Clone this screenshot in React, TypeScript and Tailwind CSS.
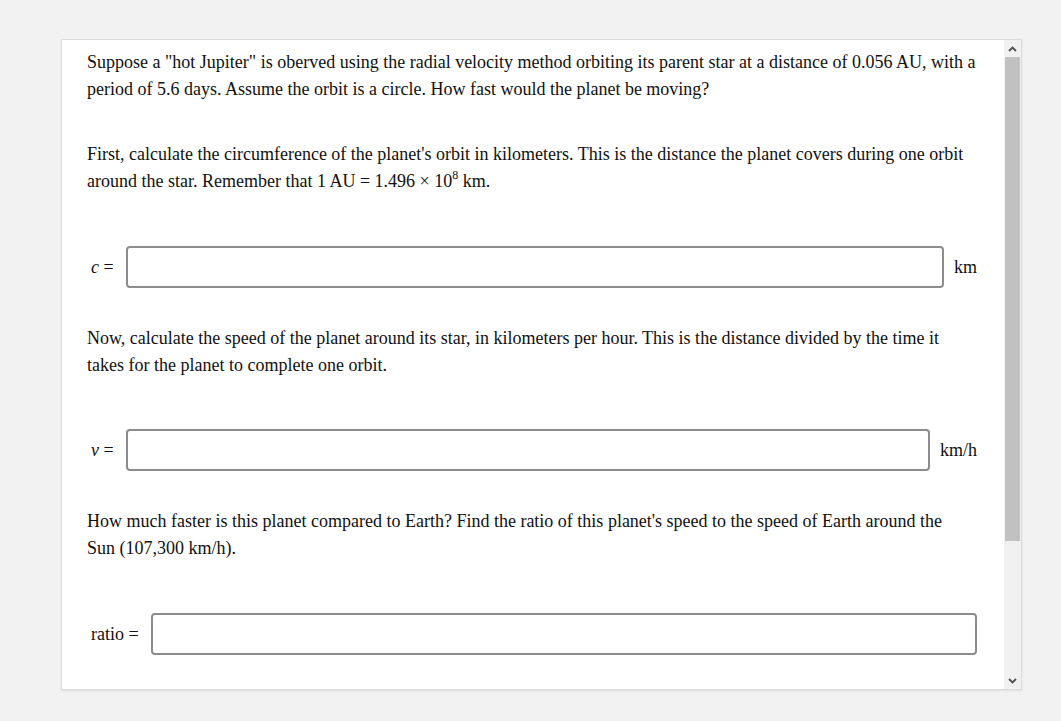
import React from "react";

const serif = { fontFamily: '"Liberation Serif", "Times New Roman", serif' };

const AnswerRow: React.FC<{ label: React.ReactNode; unit?: string }> = ({ label, unit }) => (
  <div className="mr-[2px] flex items-center">
    <span className="pl-[4px] pr-[12px] whitespace-nowrap">{label}</span>
    <input
      type="text"
      className="h-[42px] min-w-0 flex-1 rounded-[4px] border-2 border-[#8c8c8c] bg-white px-2 outline-none"
    />
    {unit && <span className="pl-[10px] whitespace-nowrap">{unit}</span>}
  </div>
);

const Scrollbar: React.FC = () => (
  <div className="flex w-[17px] flex-col bg-[#f1f1f1]">
    <div className="flex h-[17px] items-center justify-center">
      <svg width="9" height="6" viewBox="0 0 9 6">
        <path d="M1 5 L4.5 1.5 L8 5" fill="none" stroke="#505050" strokeWidth="1.8" />
      </svg>
    </div>
    <div className="mx-[1px] h-[484px] bg-[#c1c1c1]" />
    <div className="flex-1" />
    <div className="flex h-[17px] items-center justify-center">
      <svg width="9" height="6" viewBox="0 0 9 6">
        <path d="M1 1 L4.5 4.5 L8 1" fill="none" stroke="#505050" strokeWidth="1.8" />
      </svg>
    </div>
  </div>
);

export default function App() {
  return (
    <div className="min-h-screen bg-[#f2f2f2] pl-[61px] pt-[39px]" style={serif}>
      <div className="flex h-[651px] w-[961px] border border-[#dcdcdc] bg-white shadow-[0_1px_2px_rgba(0,0,0,0.08)]">
        <div className="flex-1 overflow-hidden pl-[25px] pr-[25px] pt-[9px] text-[18px] leading-[27px] text-[#111]">
          <p className="mb-[38px]">
            Suppose a "hot Jupiter" is oberved using the radial velocity method orbiting its parent star at a
            distance of 0.056 AU, with a<br />
            period of 5.6 days. Assume the orbit is a circle. How fast would the planet be moving?
          </p>
          <p className="mb-[51px]">
            First, calculate the circumference of the planet's orbit in kilometers. This is the distance the
            planet covers during one orbit
            <br />
            around the star. Remember that 1 AU = 1.496 × 10
            <span className="relative -top-[8px] text-[12px] leading-none">8</span> km.
          </p>
          <AnswerRow label={<><i>c</i> =</>} unit="km" />
          <p className="mb-[50px] mt-[37px]">
            Now, calculate the speed of the planet around its star, in kilometers per hour. This is the
            distance divided by the time it
            <br />
            takes for the planet to complete one orbit.
          </p>
          <AnswerRow label={<><i>v</i> =</>} unit="km/h" />
          <p className="mb-[51px] mt-[37px]">
            How much faster is this planet compared to Earth? Find the ratio of this planet's speed to the
            speed of Earth around the
            <br />
            Sun (107,300 km/h).
          </p>
          <AnswerRow label="ratio =" />
        </div>
        <Scrollbar />
      </div>
    </div>
  );
}
